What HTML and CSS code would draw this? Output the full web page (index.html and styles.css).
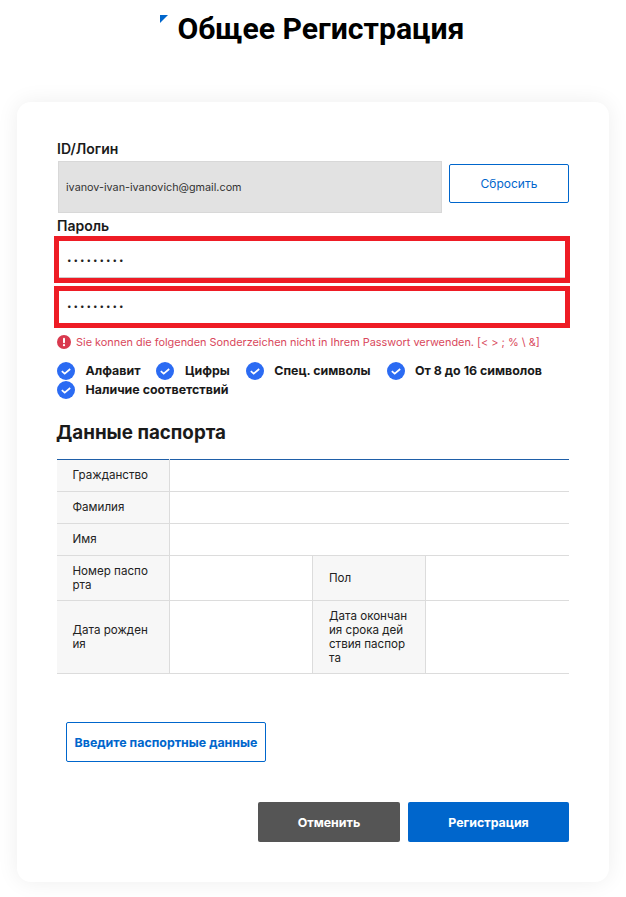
FILE: index.html
```html
<!DOCTYPE html>
<html lang="ru">
<head>
<meta charset="utf-8">
<title>Общее Регистрация</title>
<link rel="stylesheet" href="styles.css">
</head>
<body>
<header class="page-head">
  <h1 class="page-title">Общее Регистрация</h1>
</header>
<main class="card">
  <div class="field-label">ID/Логин</div>
  <div class="id-row">
    <div class="input-id">ivanov-ivan-ivanovich@gmail.com</div>
    <button class="btn-reset">Сбросить</button>
  </div>
  <div class="field-label label-pass">Пароль</div>
  <div class="input-pass first">•••••••••</div>
  <div class="input-pass second">•••••••••</div>
  <p class="error">
    <svg class="err-icon" viewBox="0 0 14 14"><circle cx="7" cy="7" r="7" fill="#d9394e"/><rect x="6" y="2.8" width="2" height="5.4" rx="1" fill="#fff"/><circle cx="7" cy="10.2" r="1.15" fill="#fff"/></svg>
    <span>Sie konnen die folgenden Sonderzeichen nicht in Ihrem Passwort verwenden. [&lt; &gt; ; % \ &amp;]</span>
  </p>
  <ul class="checks">
    <li class="check"><svg class="check-icon" viewBox="0 0 18 18"><circle cx="9" cy="9" r="9" fill="#2b6bf3"/><path d="M4.8 9.2l2.9 2.4 5.5-4.6" fill="none" stroke="#fff" stroke-width="1.7"/></svg>Алфавит</li>
    <li class="check"><svg class="check-icon" viewBox="0 0 18 18"><circle cx="9" cy="9" r="9" fill="#2b6bf3"/><path d="M4.8 9.2l2.9 2.4 5.5-4.6" fill="none" stroke="#fff" stroke-width="1.7"/></svg>Цифры</li>
    <li class="check"><svg class="check-icon" viewBox="0 0 18 18"><circle cx="9" cy="9" r="9" fill="#2b6bf3"/><path d="M4.8 9.2l2.9 2.4 5.5-4.6" fill="none" stroke="#fff" stroke-width="1.7"/></svg>Спец. символы</li>
    <li class="check"><svg class="check-icon" viewBox="0 0 18 18"><circle cx="9" cy="9" r="9" fill="#2b6bf3"/><path d="M4.8 9.2l2.9 2.4 5.5-4.6" fill="none" stroke="#fff" stroke-width="1.7"/></svg>От 8 до 16 символов</li>
    <li class="check"><svg class="check-icon" viewBox="0 0 18 18"><circle cx="9" cy="9" r="9" fill="#2b6bf3"/><path d="M4.8 9.2l2.9 2.4 5.5-4.6" fill="none" stroke="#fff" stroke-width="1.7"/></svg>Наличие соответствий</li>
  </ul>
  <h2 class="section-title">Данные паспорта</h2>
  <table class="passport">
    <colgroup><col class="c1"><col class="c2"><col class="c3"><col class="c4"></colgroup>
    <tr class="row-s"><th>Гражданство</th><td colspan="3"></td></tr>
    <tr class="row-s"><th>Фамилия</th><td colspan="3"></td></tr>
    <tr class="row-s"><th>Имя</th><td colspan="3"></td></tr>
    <tr><th>Номер паспо<br>рта</th><td></td><th>Пол</th><td></td></tr>
    <tr><th>Дата рожден<br>ия</th><td></td><th>Дата окончан<br>ия срока дей<br>ствия паспор<br>та</th><td></td></tr>
  </table>
  <button class="btn-passport">Введите паспортные данные</button>
  <div class="actions">
    <button class="btn-cancel">Отменить</button>
    <button class="btn-submit">Регистрация</button>
  </div>
</main>
</body>
</html>
```
FILE: styles.css
```css
* { box-sizing: border-box; }
html, body { margin: 0; padding: 0; }
body { background: #fff; font-family: Inter, "Noto Sans", sans-serif; color: #1a1a1a; width: 626px; height: 897px; overflow: hidden; }
.page-head { height: 102px; display: flex; justify-content: center; padding: 11px 0 0 16px; }
.page-title { position: relative; margin: 0; font-family: Roboto, sans-serif; font-size: 30.2px; line-height: 36px; font-weight: 700; color: #000; }
.page-title::before { content: ""; position: absolute; left: -18px; top: 4px; border-style: solid; border-width: 8px 8px 0 0; border-color: #0066cc transparent transparent transparent; }
.card { margin: 0 17px; width: 592px; height: 780px; background: #fff; border-radius: 14px; box-shadow: 0 0 22px rgba(0,0,0,.07); padding: 38px 40px 0; }
.field-label { font-size: 14px; line-height: 17px; font-weight: 600; color: #1a1a1a; }
.id-row { display: flex; align-items: flex-start; margin-top: 4px; padding-left: 1px; }
.input-id { width: 384px; height: 52px; background: #e2e2e2; border: 1px solid #d8d8d8; font-size: 10.8px; font-weight: 400; color: #333; padding: 18px 7px 0; line-height: 16px; }
.btn-reset { margin: 3px 0 0 7px; width: 120px; height: 39px; background: #fff; border: 1px solid #0066cc; border-radius: 2px; color: #0066cc; font: 400 12px Inter, sans-serif; }
.label-pass { margin-top: 4px; }
.input-pass { margin-left: -3px; width: 516px; background: #fff; border: 5px solid #ee1c25; font-size: 8px; letter-spacing: 2px; color: #222; padding-left: 8px; }
.input-pass.first { margin-top: 2px; height: 47px; line-height: 38px; box-shadow: inset 0 -1px 0 #cccccc; }
.input-pass.second { margin-top: 3px; height: 42px; line-height: 31px; }
.error { margin: 7px 0 0; display: flex; align-items: center; gap: 5px; font-size: 10.9px; line-height: 14px; color: #d9485c; }
.err-icon { width: 14px; height: 14px; flex: none; }
.checks { list-style: none; margin: 12px 0 0; padding: 0; display: flex; flex-wrap: wrap; column-gap: 16px; }
.check { display: flex; align-items: center; gap: 10.5px; font-size: 12.4px; font-weight: 700; line-height: 19px; color: #1a1a1a; height: 19px; }
.check-icon { width: 18px; height: 18px; flex: none; }
.section-title { margin: 22px 0 0 -1px; font-size: 18.8px; line-height: 24px; font-weight: 700; color: #1a1a1a; }
.passport { margin-top: 14px; width: 512px; table-layout: fixed; border-collapse: collapse; border-top: 1px solid #1f5fa8; }
.c1 { width: 112px; } .c2 { width: 143px; } .c3 { width: 113px; } .c4 { width: 144px; }
.passport th, .passport td { border-bottom: 1px solid #dcdcdc; border-right: 1px solid #dcdcdc; padding: 0; }
.passport tr > :last-child { border-right: 0; }
.passport th { background: #f7f7f7; font-size: 11.6px; line-height: 14px; font-weight: 400; text-align: left; padding: 8px 15.5px; color: #222; }
.passport th:nth-child(3) { padding-left: 16.5px; }
.row-s { height: 32px; }
.row-s th { padding-top: 7px; padding-bottom: 9px; }
.btn-passport { display: block; margin: 48px 0 0 9px; width: 200px; height: 40px; padding: 0; background: #fff; border: 1px solid #0066cc; border-radius: 2px; color: #0066cc; font: 700 12.4px Inter, sans-serif; }
.actions { display: flex; justify-content: flex-end; gap: 8px; margin-top: 40px; }
.btn-cancel, .btn-submit { height: 40px; border: 0; border-radius: 2px; color: #fff; font: 700 12.4px Inter, sans-serif; }
.btn-cancel { width: 142px; background: #555; }
.btn-submit { width: 161px; background: #0066cc; }
```
